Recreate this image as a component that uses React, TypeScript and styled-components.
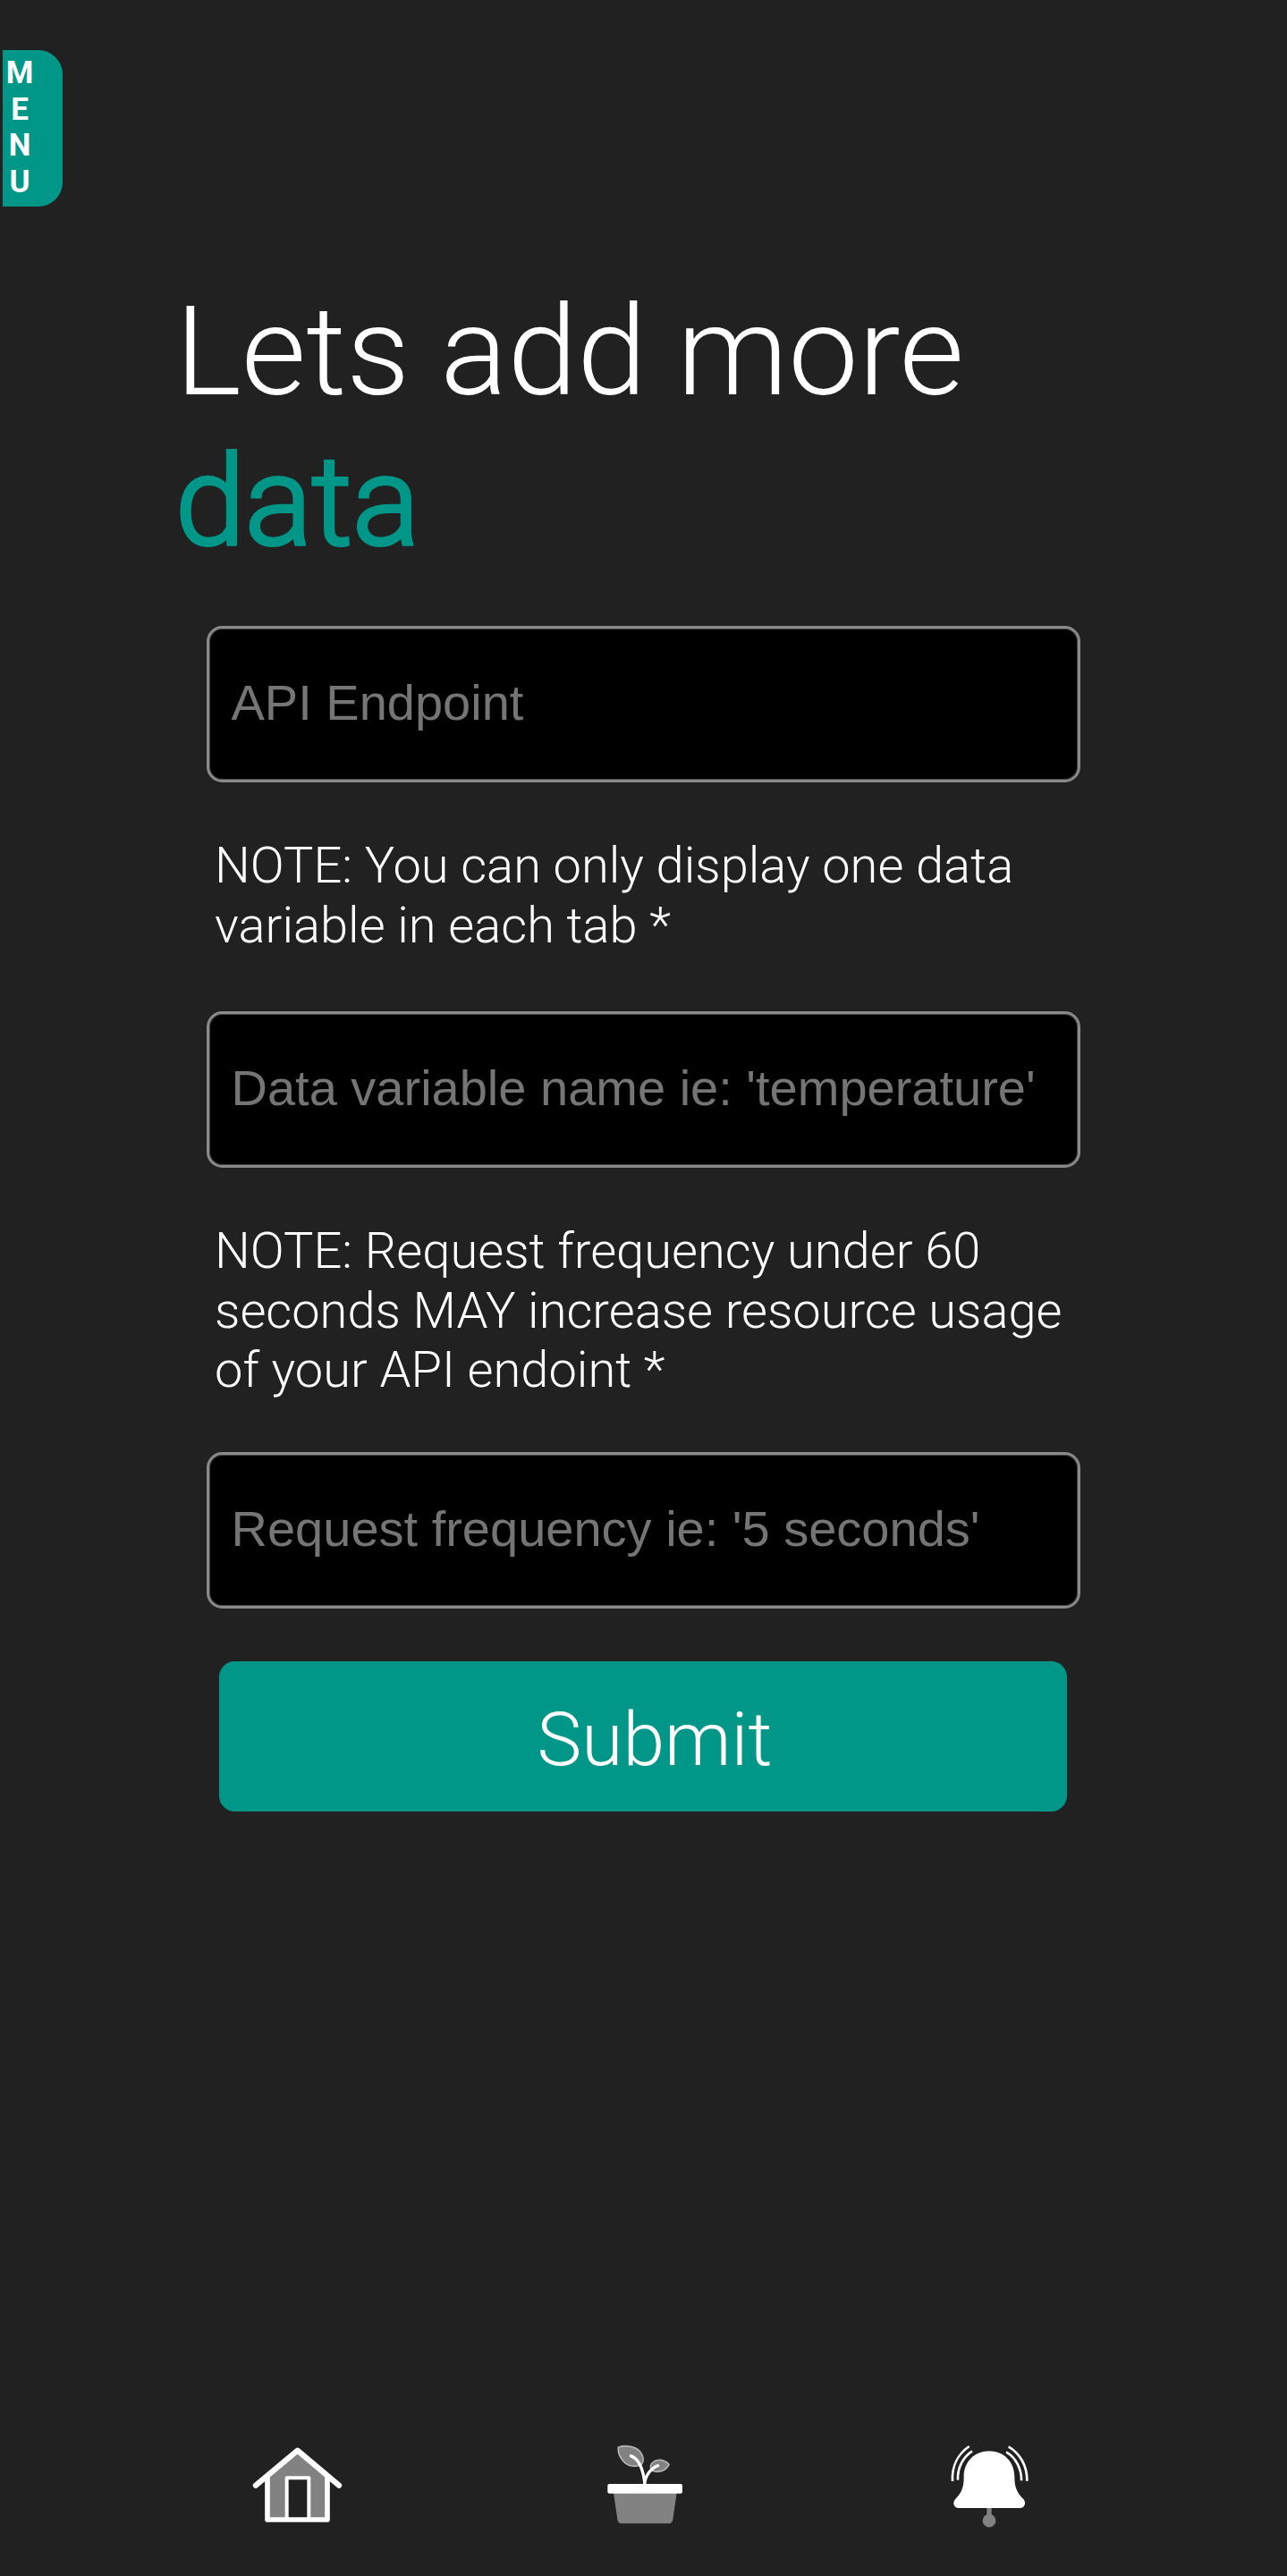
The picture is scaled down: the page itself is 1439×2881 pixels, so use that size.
import React from "react";
import styled, { createGlobalStyle } from "styled-components";

const GlobalStyle = createGlobalStyle`
  * { box-sizing: border-box; }
  body { margin: 0; background: #212121; }
`;

const Screen = styled.div`
  display: flex;
  flex-direction: column;
  width: 1439px;
  height: 2881px;
  padding-top: 56px;
  background: #212121;
  color: #fff;
  font-family: Roboto, sans-serif;
  font-weight: 300;
  overflow: hidden;
`;

const MenuTab = styled.button`
  display: flex;
  flex-direction: column;
  align-items: center;
  width: 67px;
  height: 175px;
  margin: 0 0 0 3px;
  padding: 6px 29px 0 0;
  border: 0;
  border-radius: 0 27px 27px 0;
  background: #009688;
  color: #fff;
  font: 700 35px/40.7px Roboto, sans-serif;
`;

const Title = styled.h1`
  margin: 77px 0 0 196px;
  font-size: 140px;
  font-weight: 300;
  line-height: 170px;
`;

const Accent = styled.span`
  display: block;
  margin: -2px 0 2px;
  color: #009688;
  -webkit-text-stroke: 4px #009688;
`;

const Form = styled.form`
  display: flex;
  flex-direction: column;
  width: 977px;
  margin: 52px 0 0 231px;
`;

const Field = styled.input`
  width: 100%;
  height: 175px;
  padding: 0 24px 4px 24.5px;
  border: 3px solid #8a8a8a;
  border-radius: 17.5px;
  outline: 0;
  background: #000;
  box-shadow: inset 0 0 0 1px #444;
  color: #fff;
  font: 400 56px "Liberation Sans", Arial, sans-serif;
  &::placeholder { color: #757575; opacity: 1; }
`;

const Note = styled.p<{ $after: number }>`
  margin: 60px 0 ${(p) => p.$after}px 9px;
  font-size: 56px;
  line-height: 66.5px;
  white-space: pre-line;
`;

const Submit = styled.button`
  width: 948px;
  height: 168px;
  margin: 59px 0 0 14px;
  padding: 6px 0 0 26px;
  border: 0;
  border-radius: 17.5px;
  background: #009688;
  color: #fff;
  font: 300 84px Roboto, sans-serif;
`;

const Nav = styled.nav`
  display: flex;
  margin: auto 0 31px 270px;
`;

const Tab = styled.a<{ $gap?: number }>`
  width: 130px;
  height: 130px;
  margin-right: ${(p) => p.$gap ?? 0}px;
  svg { display: block; width: 130px; height: 130px; }
`;

const HouseIcon = () => (
  <svg viewBox="0 0 390 390" fill="none" stroke="#fff" strokeLinejoin="round" strokeLinecap="round">
    <path d="M87 152 188 66 288 152V294H226V154H152V294H87Z" fill="#828282" stroke="none" />
    <path d="M87 154V294H288V154" strokeWidth="17" />
    <path d="M152 290V154H226V290" strokeWidth="12" />
    <path d="M48 179 188 62 327 179" strokeWidth="19" />
  </svg>
);

const PlantIcon = () => (
  <svg viewBox="0 0 390 390">
    <path d="M78 204H290L277 293Q275 307 261 307H106Q94 307 91 293Z" fill="#828282" />
    <rect x="58" y="174" width="251" height="32" rx="6" fill="#fff" />
    <g fill="#828282" stroke="#b5b5b5" strokeWidth="5" strokeLinejoin="round">
      <path d="M94 51C118 42 158 48 172 73C179 85 180 100 171 109C157 118 127 117 111 98C99 85 92 68 94 51Z" />
      <path d="M264 109C251 93 224 88 209 102C200 110 200 121 208 130C225 137 253 132 264 109Z" />
    </g>
    <path d="M136 80C163 90 177 119 183 174M182 174C185 146 203 121 227 113" fill="none" stroke="#fff" strokeWidth="10" strokeLinecap="round" />
  </svg>
);

const BellIcon = () => (
  <svg viewBox="0 0 390 390">
    <path d="M190 253H206V277A22 22 0 1 1 190 277Z" fill="#828282" />
    <path d="M198 64C248 64 283 100 283 151C283 187 292 205 313 225Q319 231 318 241Q316 255 300 255H97Q81 255 79 241Q78 231 85 224C105 205 113 187 113 151C113 100 148 64 198 64Z" fill="#fff" />
    <g fill="none" stroke="#fff" strokeWidth="8">
      <path d="M131 48C94 73 72 114 75 165" />
      <path d="M141 64C110 84 91 120 93 161" />
      <path d="M263 49C300 71 326 112 325 164" />
      <path d="M255 67C286 84 307 122 306 163" />
    </g>
  </svg>
);

export default function App() {
  return (
    <>
      <GlobalStyle />
      <Screen>
        <MenuTab type="button">
          {["M", "E", "N", "U"].map((letter) => (
            <span key={letter}>{letter}</span>
          ))}
        </MenuTab>
        <Title>
          Lets add more <Accent>data</Accent>
        </Title>
        <Form>
          <Field placeholder="API Endpoint" />
          <Note $after={63}>{"NOTE: You can only display one data\nvariable in each tab *"}</Note>
          <Field placeholder="Data variable name ie: 'temperature'" />
          <Note $after={58.5}>{"NOTE: Request frequency under 60\nseconds MAY increase resource usage\nof your API endoint *"}</Note>
          <Field placeholder="Request frequency ie: '5 seconds'" />
          <Submit type="button">Submit</Submit>
        </Form>
        <Nav>
          <Tab $gap={260}><HouseIcon /></Tab>
          <Tab $gap={250}><PlantIcon /></Tab>
          <Tab><BellIcon /></Tab>
        </Nav>
      </Screen>
    </>
  );
}
